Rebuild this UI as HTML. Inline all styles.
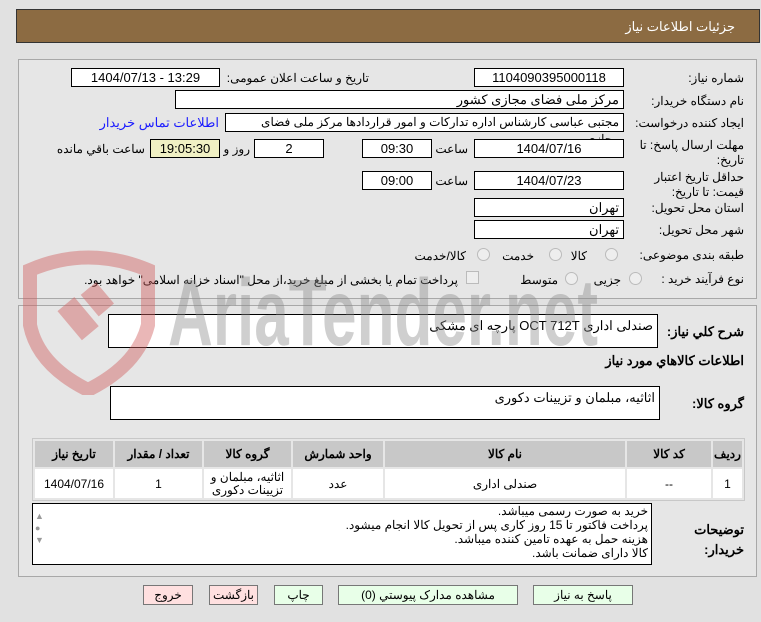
<!DOCTYPE html>
<html><head><meta charset="utf-8"><style>
body{margin:0;width:761px;height:622px;background:#e1e1e1;font-family:Tahoma,"Liberation Sans","Noto Sans CJK SC",sans-serif;font-size:12px;color:#000;position:relative;overflow:hidden}
.a{position:absolute}
.box{position:absolute;background:#fff;border:1px solid #000;box-sizing:border-box;height:19px;line-height:17px;text-align:center;font-size:13px}
.lbl{position:absolute;direction:rtl;white-space:nowrap}
.r{text-align:right;padding-right:4px}
.panel{position:absolute;border:1px solid #a8a8a8;background:#e6e6e6;box-sizing:border-box}
.rad{position:absolute;width:11px;height:11px;border:1px solid #bbb;border-radius:50%;background:#eee}
table{border-collapse:separate;border-spacing:2px;position:absolute;left:32px;top:438px;width:713px;background:#e6e6e6;border:1px solid #c8c8c8}
th{background:#c8c8c8;height:24px;font-weight:bold;font-size:12px}
td{background:#fff;height:27px;text-align:center;font-size:12px}
.btn{position:absolute;top:585px;height:20px;border:1px solid #777;box-sizing:border-box;text-align:center;line-height:18px;font-size:12px;background:#e8ffe8}
.red{background:#ffe0e0}
</style></head><body>
<div class="a" style="left:16px;top:9px;width:744px;height:34px;background:#8c6b42;border:1px solid #333;box-sizing:border-box"></div>
<div class="lbl" style="right:26px;top:19px;color:#fff;font-size:13px">جزئیات اطلاعات نیاز</div>

<div class="panel" style="left:18px;top:59px;width:739px;height:240px"></div>
<div class="panel" style="left:18px;top:305px;width:739px;height:272px"></div>

<div class="lbl" style="right:17px;top:71px">شماره نیاز:</div>
<div class="box" style="left:474px;top:68px;width:150px">1104090395000118</div>
<div class="lbl" style="right:392px;top:71px">تاریخ و ساعت اعلان عمومی:</div>
<div class="box" style="left:71px;top:68px;width:149px">1404/07/13 - 13:29</div>

<div class="lbl" style="right:17px;top:94px">نام دستگاه خریدار:</div>
<div class="box r" style="left:175px;top:90px;width:449px;direction:rtl">مرکز ملی فضای مجازی کشور</div>

<div class="lbl" style="right:17px;top:116px">ایجاد کننده درخواست:</div>
<div class="box r" style="left:225px;top:113px;width:399px;direction:rtl;font-size:12px">مجتبی عباسی کارشناس اداره تدارکات و امور قراردادها مرکز ملی فضای مجازی</div>
<div class="lbl" style="right:542px;top:115px;color:#1a1aff;font-size:13px">اطلاعات تماس خریدار</div>

<div class="lbl" style="right:17px;top:138px;line-height:15px;text-align:right">مهلت ارسال پاسخ: تا<br>تاریخ:</div>
<div class="box" style="left:474px;top:139px;width:150px">1404/07/16</div>
<div class="lbl" style="right:293px;top:142px">ساعت</div>
<div class="box" style="left:362px;top:139px;width:70px">09:30</div>
<div class="box" style="left:254px;top:139px;width:70px">2</div>
<div class="lbl" style="right:511px;top:142px">روز و</div>
<div class="box" style="left:150px;top:139px;width:70px;background:#f0f0c4">19:05:30</div>
<div class="lbl" style="right:616px;top:142px">ساعت باقي مانده</div>

<div class="lbl" style="right:17px;top:170px;line-height:15px;text-align:right">حداقل تاریخ اعتبار<br>قیمت: تا تاریخ:</div>
<div class="box" style="left:474px;top:171px;width:150px">1404/07/23</div>
<div class="lbl" style="right:293px;top:174px">ساعت</div>
<div class="box" style="left:362px;top:171px;width:70px">09:00</div>

<div class="lbl" style="right:17px;top:201px">استان محل تحویل:</div>
<div class="box r" style="left:474px;top:198px;width:150px;direction:rtl">تهران</div>
<div class="lbl" style="right:17px;top:223px">شهر محل تحویل:</div>
<div class="box r" style="left:474px;top:220px;width:150px;direction:rtl">تهران</div>

<div class="lbl" style="right:17px;top:248px">طبقه بندی موضوعی:</div>
<div class="rad" style="left:605px;top:248px"></div><div class="lbl" style="right:174px;top:249px">کالا</div>
<div class="rad" style="left:549px;top:248px"></div><div class="lbl" style="right:227px;top:249px">خدمت</div>
<div class="rad" style="left:477px;top:248px"></div><div class="lbl" style="right:295px;top:249px">کالا/خدمت</div>

<div class="lbl" style="right:17px;top:272px">نوع فرآیند خرید :</div>
<div class="rad" style="left:629px;top:272px"></div><div class="lbl" style="right:140px;top:273px">جزیی</div>
<div class="rad" style="left:565px;top:272px"></div><div class="lbl" style="right:203px;top:273px">متوسط</div>
<div class="a" style="left:466px;top:271px;width:11px;height:11px;border:1px solid #bbb;background:#eee"></div>
<div class="lbl" style="right:303px;top:273px">پرداخت تمام یا بخشی از مبلغ خرید،از محل "اسناد خزانه اسلامی" خواهد بود.</div>

<div class="lbl" style="right:17px;top:324px;font-weight:bold;font-size:13px">شرح کلي نیاز:</div>
<div class="box r" style="left:108px;top:314px;width:550px;height:34px;text-align:right;direction:rtl;line-height:22px">صندلی اداری OCT 712T پارچه ای مشکی</div>
<div class="lbl" style="right:17px;top:353px;font-weight:bold;font-size:13px">اطلاعات کالاهاي مورد نیاز</div>
<div class="lbl" style="right:17px;top:396px;font-weight:bold;font-size:13px">گروه کالا:</div>
<div class="box r" style="left:110px;top:386px;width:550px;height:34px;text-align:right;direction:rtl;line-height:22px">اثاثیه، مبلمان و تزیینات دکوری</div>

<table dir="rtl">
<tr><th style="width:27px">ردیف</th><th style="width:82px">کد کالا</th><th style="width:238px">نام کالا</th><th style="width:88px">واحد شمارش</th><th style="width:85px">گروه کالا</th><th style="width:85px">تعداد / مقدار</th><th>تاریخ نیاز</th></tr>
<tr><td>1</td><td>--</td><td>صندلی اداری</td><td>عدد</td><td style="line-height:13px">اثاثیه، مبلمان و تزیینات دکوری</td><td>1</td><td>1404/07/16</td></tr>
</table>

<div class="lbl" style="right:17px;top:520px;font-weight:bold;font-size:13px;line-height:20px;text-align:right">توضیحات<br>خریدار:</div>
<div class="box" style="left:32px;top:503px;width:620px;height:62px;text-align:right;direction:rtl;padding-right:3px;line-height:14px;font-size:12px">خرید به صورت رسمی میباشد.<br>پرداخت فاکتور تا 15 روز کاری پس از تحویل کالا انجام میشود.<br>هزینه حمل به عهده تامین کننده میباشد.<br>کالا دارای ضمانت باشد.</div>
<div class="a" style="left:35px;top:510px;color:#999;font-size:9px;line-height:12px">▲<br>●<br>▼</div>

<div class="btn" style="left:533px;width:100px">پاسخ به نیاز</div>
<div class="btn" style="left:338px;width:180px">مشاهده مدارک پیوستي (0)</div>
<div class="btn" style="left:274px;width:49px">چاپ</div>
<div class="btn red" style="left:209px;width:49px">بازگشت</div>
<div class="btn red" style="left:143px;width:50px">خروج</div>

<!-- watermark on top -->
<svg class="a" style="left:18px;top:245px;pointer-events:none" width="600" height="150">
<g opacity="0.45">
<path d="M12 25 Q70 0 130 25 L130 80 Q120 120 70 145 Q20 120 12 80 Z" fill="none" stroke="#d06060" stroke-width="14"/>
<rect x="50" y="55" width="22" height="38" fill="#d06060" transform="rotate(-40 60 75)"/>
<rect x="70" y="40" width="20" height="28" fill="#d06060" transform="rotate(-40 80 55)"/>
</g>
<text x="150" y="100" font-family="Liberation Sans Narrow,Liberation Sans,sans-serif" font-size="95" font-weight="bold" fill="#888" opacity="0.4" textLength="430" lengthAdjust="spacingAndGlyphs">AriaTender.net</text>
</svg>
</body></html>
